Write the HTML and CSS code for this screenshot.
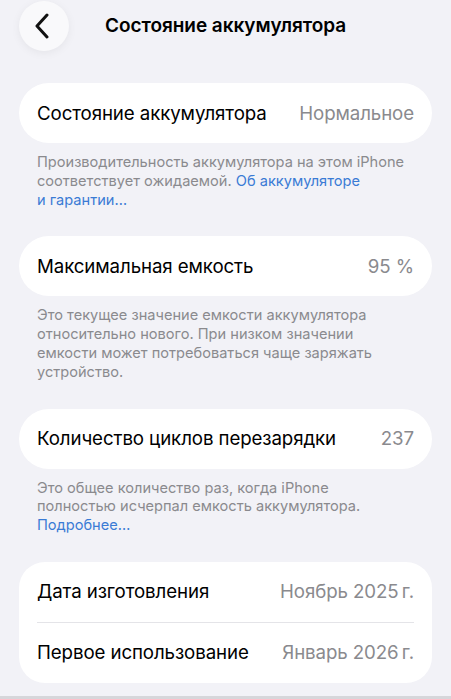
FILE: index.html
```html
<!DOCTYPE html>
<html lang="ru">
<head>
<meta charset="utf-8">
<link rel="stylesheet" href="styles.css">
</head>
<body>
<div class="screen">
  <header class="nav">
    <div class="back">
      <svg width="16" height="26" viewBox="0 0 16 26"><path d="M13 2 L3 13 L13 24" fill="none" stroke="#111" stroke-width="3" stroke-linecap="round" stroke-linejoin="round"/></svg>
    </div>
    <h1 class="title">Состояние аккумулятора</h1>
  </header>

  <section class="card">
    <div class="row"><span class="label">Состояние аккумулятора</span><span class="value">Нормальное</span></div>
  </section>
  <p class="note">Производительность аккумулятора на этом iPhone<br>соответствует ожидаемой. <span class="link">Об аккумуляторе<br>и&nbsp;гарантии…</span></p>

  <section class="card">
    <div class="row"><span class="label">Максимальная емкость</span><span class="value">95 %</span></div>
  </section>
  <p class="note">Это текущее значение емкости аккумулятора<br>относительно нового. При низком значении<br>емкости может потребоваться чаще заряжать<br>устройство.</p>

  <section class="card">
    <div class="row"><span class="label">Количество циклов перезарядки</span><span class="value">237</span></div>
  </section>
  <p class="note">Это общее количество раз, когда iPhone<br>полностью исчерпал емкость аккумулятора.<br><span class="link">Подробнее…</span></p>

  <section class="card card-group">
    <div class="row"><span class="label">Дата изготовления</span><span class="value">Ноябрь 2025&#8201;г.</span></div>
    <div class="divider"></div>
    <div class="row"><span class="label">Первое использование</span><span class="value">Январь 2026&#8201;г.</span></div>
  </section>
</div>
<div class="bottom-line"></div>
</body>
</html>
```

FILE: styles.css
```css
* { box-sizing: border-box; }
html, body { margin: 0; padding: 0; }
body {
  background: #f2f2f7;
  font-family: Inter, "Noto Sans", "Liberation Sans", sans-serif;
  width: 451px;
  height: 699px;
  overflow: hidden;
  position: relative;
}
.screen { padding: 0 19px; }
.nav {
  display: flex;
  align-items: center;
  height: 51px;
  margin-bottom: 32px;
}
.back {
  width: 50px;
  height: 50px;
  border-radius: 50%;
  background: #f9f9fb;
  box-shadow: 0 2px 10px rgba(0,0,0,0.06);
  display: flex;
  align-items: center;
  justify-content: center;
  flex-shrink: 0;
  margin-right: 36px;
}
.back svg { margin-left: -4px; }
.title {
  margin: 0;
  font-size: 19px;
  font-weight: 600;
  color: #000;
  letter-spacing: -0.05px;
}
.card {
  background: #fff;
  border-radius: 30px;
  padding: 0 18px;
}
.card-group { border-radius: 26px; }
.row {
  display: flex;
  justify-content: space-between;
  align-items: center;
  height: 60px;
  font-size: 18.7px;
  letter-spacing: -0.1px;
}
.label { color: #000; }
.value { color: #8a8a8e; }
.divider { height: 1px; background: #e4e4e8; }
.note {
  margin: 0 0 27px;
  padding: 10px 18px 0;
  font-size: 14.6px;
  line-height: 18.8px;
  color: #8a8a8e;
  white-space: nowrap;
}
.link { color: #3a7bd5; }
.bottom-line {
  position: absolute;
  left: 0; right: 0; bottom: 0;
  height: 3px;
  background: #d6d6da;
}
```
